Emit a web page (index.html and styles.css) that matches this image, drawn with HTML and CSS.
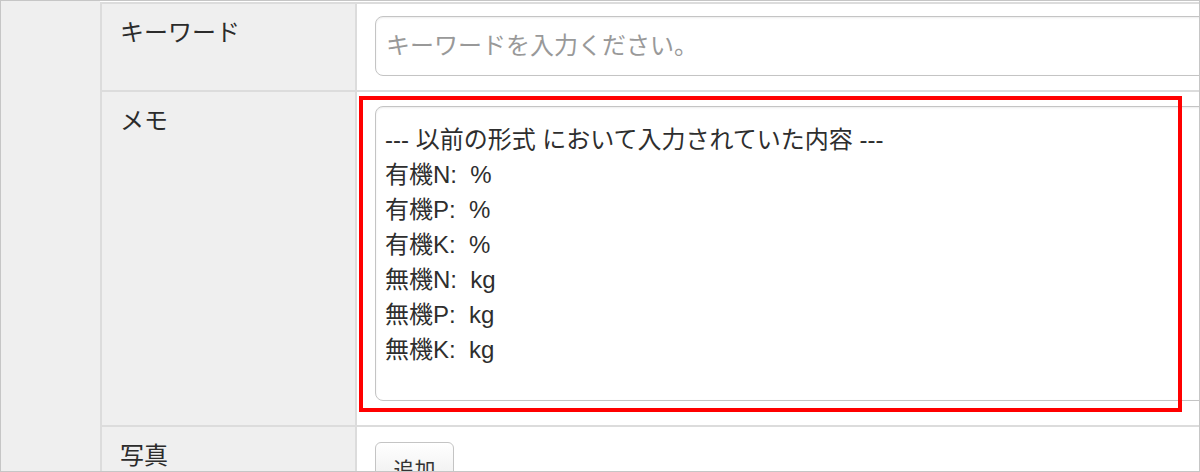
FILE: index.html
```html
<!DOCTYPE html>
<html lang="ja">
<head>
    <meta charset="UTF-8">
    <meta name="viewport" content="width=device-width, initial-scale=1.0">
    <title>メモ</title>
    <link rel="stylesheet" href="styles.css">
</head>
<body>
    <div class="frame">
        <div class="side"></div>

        <div class="form">
            <div class="row row-keyword">
                <div class="label">キーワード</div>
                <div class="field">
                    <input class="input" type="text" placeholder="キーワードを入力ください。">
                </div>
            </div>

            <div class="row row-memo">
                <div class="label">メモ</div>
                <div class="field">
                    <textarea class="memo">--- 以前の形式 において入力されていた内容 ---
有機N:  %
有機P:  %
有機K:  %
無機N:  kg
無機P:  kg
無機K:  kg
</textarea>
                </div>
            </div>

            <div class="row row-photo">
                <div class="label">写真</div>
                <div class="field">
                    <button class="btn">追加</button>
                </div>
            </div>
        </div>

        <!-- annotation box around the memo field -->
        <div class="highlight"></div>
    </div>
</body>
</html>
```

FILE: styles.css
```css
body {
    margin: 0;
    font-family: "Liberation Sans", "Noto Sans CJK JP", sans-serif;
    color: #2b2b2b;
    background: #ffffff;
}

.frame {
    position: relative;
    display: flex;
    width: 1200px;
    height: 472px;
    box-sizing: border-box;
    border: 1px solid #c6c6c6;
    overflow: hidden;
    background: #ffffff;
}

.side {
    flex: none;
    width: 99px;
    background: #efefef;
}

.form {
    flex: none;
    width: 1300px;
    margin-top: 1px;
    border-top: 2px solid #dcdcdc;
    border-left: 2px solid #dcdcdc;
}

.row {
    display: grid;
    grid-template-columns: 255px 1fr;
    border-bottom: 2px solid #dcdcdc;
}

.row-keyword {
    height: 86px;
}

.row-memo {
    height: 333px;
}

.row-photo {
    height: 60px;
}

.label {
    padding: 12px 18px 0;
    background: #efefef;
    border-right: 2px solid #dcdcdc;
    font-size: 24px;
    line-height: 34px;
}

.field {
    padding: 0 0 0 18px;
}

.row-keyword .field {
    padding-top: 12px;
}

.row-memo .field {
    padding-top: 14px;
}

.row-photo .field {
    padding-top: 15px;
}

.input, .memo {
    display: block;
    width: 840px;
    box-sizing: border-box;
    border: 1px solid #c4c4c4;
    border-radius: 8px;
    box-shadow: inset 0 1px 2px rgba(0, 0, 0, 0.08);
    font-family: inherit;
    font-size: 24px;
    color: #2e2e2e;
    background: #ffffff;
    margin: 0;
    outline: none;
}

.input {
    height: 60px;
    padding: 0 10px;
}

.input::placeholder {
    color: #999999;
}

.memo {
    height: 295px;
    padding: 15px 9px;
    line-height: 35px;
    resize: none;
    overflow: hidden;
}

.btn {
    width: 79px;
    height: 48px;
    padding: 8px 0 0;
    box-sizing: border-box;
    border: 1px solid #c4c4c4;
    border-radius: 6px;
    background: linear-gradient(#ffffff, #ebebeb);
    font-family: inherit;
    font-size: 21px;
    line-height: 30px;
    color: #333333;
    text-align: center;
    vertical-align: top;
}

.highlight {
    position: absolute;
    left: 358px;
    top: 95px;
    width: 823px;
    height: 316px;
    box-sizing: border-box;
    border: 4px solid #ff0000;
}
```
